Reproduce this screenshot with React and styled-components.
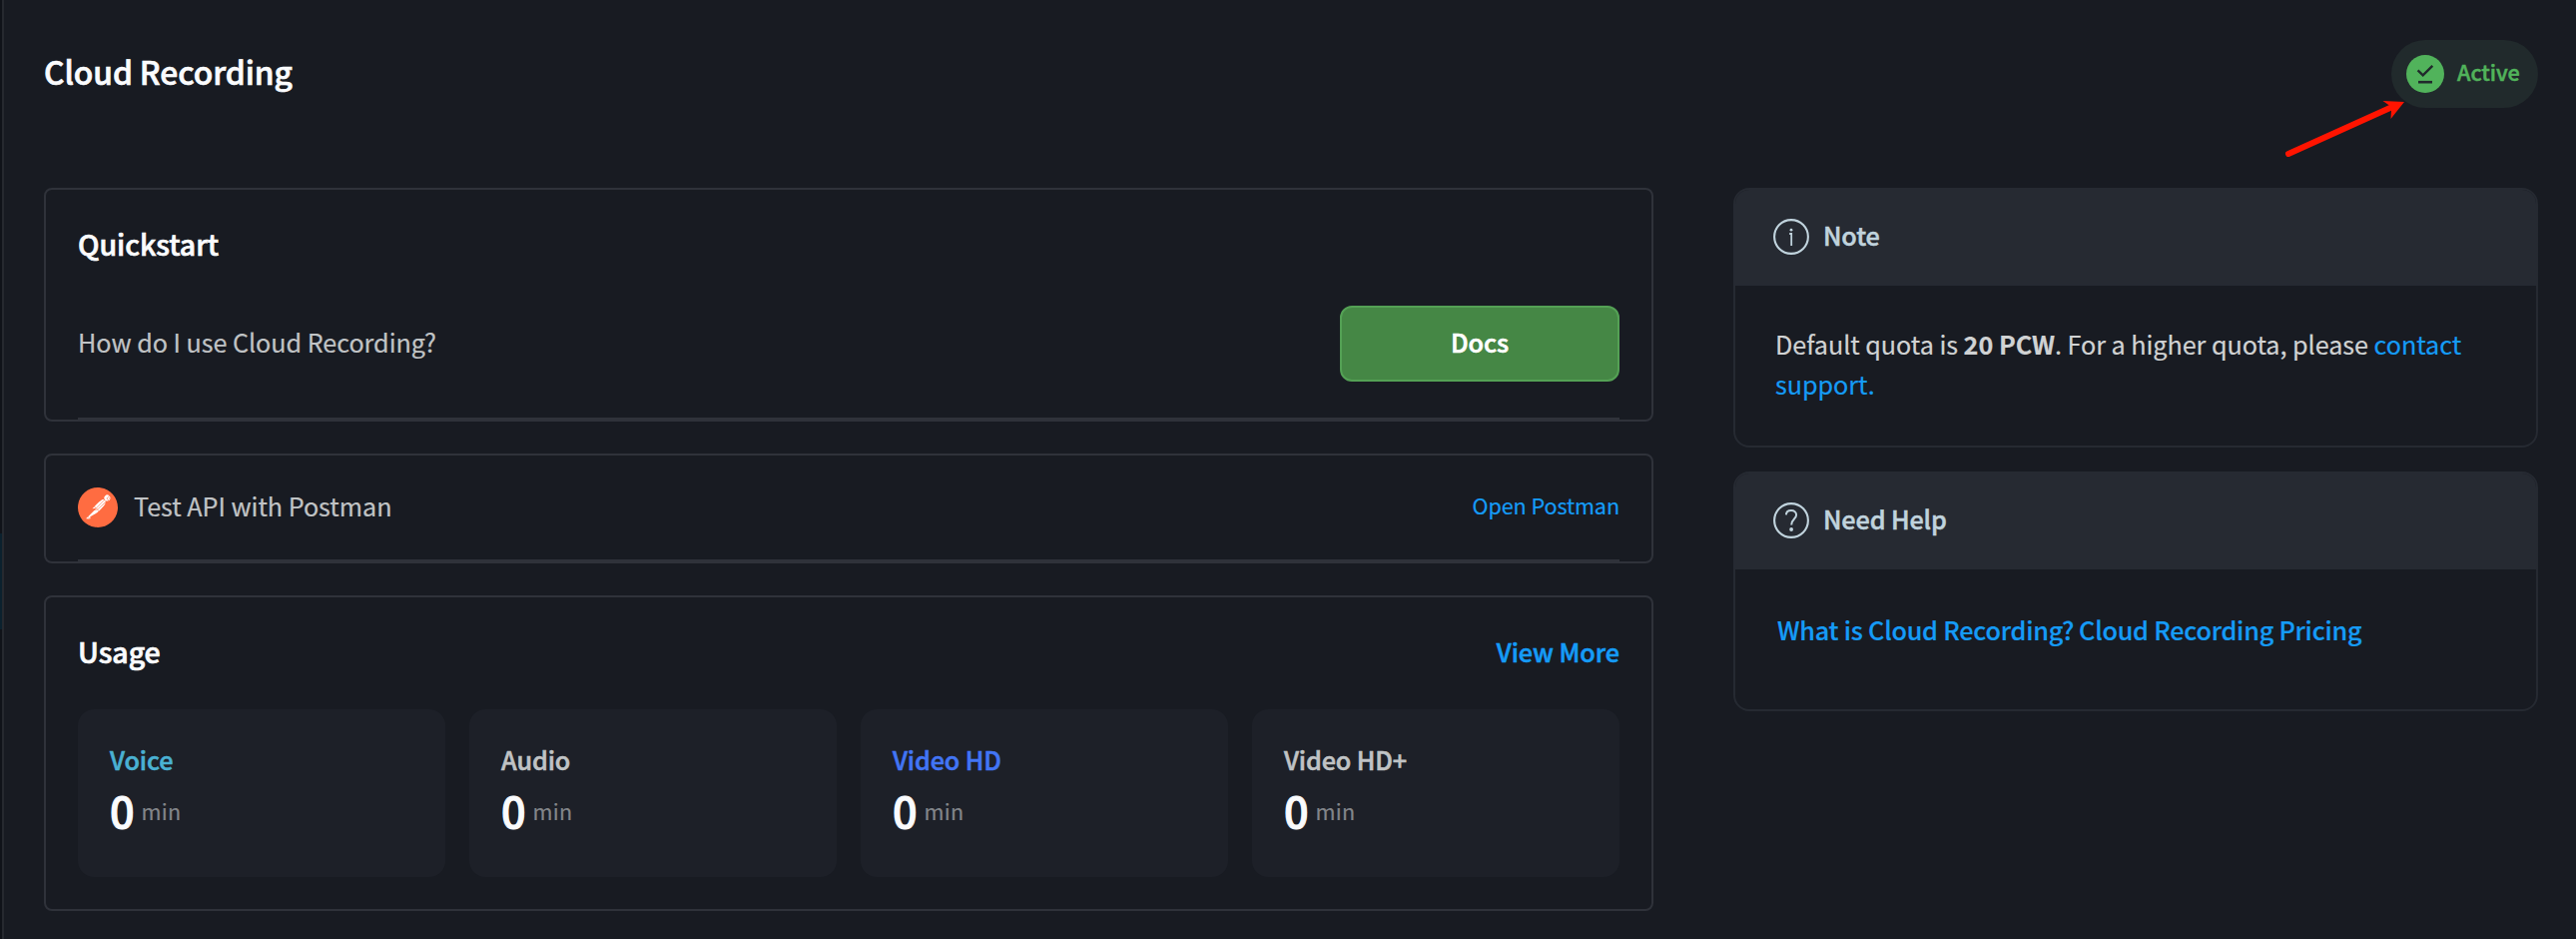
import React from 'react';
import styled, { createGlobalStyle } from 'styled-components';
import { SiPostman } from 'react-icons/si';

const GlobalStyle = createGlobalStyle`
  *, *::before, *::after { box-sizing: border-box; }
  body {
    margin: 0;
    background: #181b22;
    font-family: "Noto Sans CJK SC", "Noto Sans", sans-serif;
    font-size: 25.2px;
    font-weight: 400;
    line-height: 40px;
    letter-spacing: -0.05px;
    -webkit-text-stroke: 0.2px;
    color: #c0c3c5;
  }
`;

const Shell = styled.div`
  display: flex;
  width: 2580px;
  height: 940px;
  overflow: hidden;
`;

const NavEdge = styled.div`
  flex: none;
  width: 4px;
  padding-top: 534px;
  background: #101319;
  border-right: 2px solid #26292f;
`;

const NavActive = styled.div`
  height: 96px;
  background: #0b212e;
`;

const Page = styled.main`
  flex: 1;
  padding: 40px 38px 0 40px;
`;

const Header = styled.header`
  display: flex;
  align-items: center;
  justify-content: space-between;
  height: 68px;
  margin-bottom: 80px;
`;

const Title = styled.h1`
  margin: 0;
  padding-bottom: 6px;
  font-size: 31.8px;
  font-weight: 500;
  letter-spacing: -0.1px;
  -webkit-text-stroke: 0.7px;
  color: #fafbfd;
`;

const StatusPill = styled.div`
  position: relative;
  display: flex;
  align-items: center;
  gap: 13px;
  width: 147px;
  height: 68px;
  padding-left: 15px;
  border-radius: 34px;
  background: #212a2c;
`;

const StatusText = styled.span`
  padding-bottom: 5px;
  font-size: 21.6px;
  font-weight: 500;
  -webkit-text-stroke: 0.5px;
  color: #51b35b;
`;

const Pointer = styled.svg`
  position: absolute;
  left: -107px;
  top: 56px;
  overflow: visible;
`;

const Columns = styled.div`
  display: flex;
  align-items: flex-start;
  justify-content: space-between;
`;

const MainColumn = styled.section`
  display: flex;
  flex-direction: column;
  gap: 32px;
  width: 1612px;
`;

const SideColumn = styled.aside`
  display: flex;
  flex-direction: column;
  gap: 24px;
  width: 806px;
`;

const Card = styled.div`
  padding: ${(p) => p.$padding};
  border: 2px solid #2f323a;
  border-radius: 8px;
`;

const CardRow = styled.div`
  display: flex;
  align-items: center;
  justify-content: space-between;
  height: ${(p) => p.$height}px;
`;

const QuickRow = styled(CardRow)`
  margin-top: 42px;
`;

const Divider = styled.div`
  height: 2px;
  margin-top: ${(p) => p.$gap || 0}px;
  background: #2f323a;
`;

const CardTitle = styled.h2`
  margin: 0;
  font-size: 28.5px;
  font-weight: 500;
  -webkit-text-stroke: 0.7px;
  color: #fafbfd;
`;

const Label = styled.span`
  padding-bottom: 5px;
`;

const Brand = styled.div`
  display: flex;
  align-items: center;
  gap: 16px;
`;

const PostmanBadge = styled.span`
  display: flex;
  color: #ff6c41;
  background: radial-gradient(circle, #fff 0 17px, transparent 17.5px);
`;

const DocsButton = styled.button`
  width: 280px;
  height: 76px;
  padding: 0 0 4px;
  border: 2px solid #54a155;
  border-radius: 12px;
  background: #458745;
  color: #fff;
  font: inherit;
  font-weight: 500;
  -webkit-text-stroke: 0.6px;
`;

const Link = styled.a`
  color: #159bf7;
`;

const StrongLink = styled(Link)`
  font-weight: 500;
  -webkit-text-stroke: ${(p) => p.$stroke || 0.55}px;
`;

const SmallLink = styled(Link)`
  padding-bottom: 5px;
  font-size: 21.6px;
  letter-spacing: -0.1px;
`;

const Stats = styled.div`
  display: grid;
  grid-template-columns: repeat(4, 368px);
  gap: 24px;
  margin-top: 38px;
`;

const Stat = styled.div`
  height: 168px;
  padding: 30px 32px 0;
  border-radius: 16px;
  background: #1d2028;
`;

const StatName = styled.div`
  font-weight: 500;
  letter-spacing: -0.12px;
  -webkit-text-stroke: 0.55px;
  color: ${(p) => p.$color};
`;

const StatValue = styled.div`
  display: flex;
  align-items: center;
  gap: 7px;
  height: 48px;
  margin-top: 6px;
  font-size: 43.2px;
  font-weight: 500;
  -webkit-text-stroke: 1px;
  color: #fafbfd;
`;

const Unit = styled.span`
  padding-top: 3px;
  font-size: 21.6px;
  font-weight: 400;
  letter-spacing: 0.2px;
  -webkit-text-stroke: 0.2px;
  color: #82858a;
`;

const SideCard = styled.div`
  border: 2px solid #262a32;
  border-radius: 16px;
  overflow: hidden;
`;

const SideHeader = styled.div`
  display: flex;
  align-items: center;
  gap: 14px;
  height: 96px;
  padding: 0 38px 2px;
  background: #262a32;
  color: #c0d3dd;
  font-weight: 500;
`;

const SideTitle = styled.span`
  padding-bottom: 4px;
  letter-spacing: -0.12px;
  -webkit-text-stroke: 0.5px;
`;

const SideBody = styled.div`
  padding: ${(p) => p.$padding};
  color: #d0d2d3;

  b { font-weight: 700; }
`;

const HelpLinks = styled.div`
  display: flex;
  gap: 5px;
  letter-spacing: -0.22px;
`;

function ActiveIcon() {
  return (
    <svg width="38" height="38" viewBox="0 0 38 38" fill="none">
      <circle cx="19" cy="19" r="19" fill="#51b35b" />
      <path d="M11.6 15.4L16.7 20.4L26.3 10.9" stroke="#212a2c" strokeWidth="2.4" />
      <path d="M12 27.2H26" stroke="#212a2c" strokeWidth="2.6" />
    </svg>
  );
}

function InfoIcon() {
  return (
    <svg width="36" height="36" viewBox="0 0 36 36" fill="none" stroke="currentColor" strokeWidth="2.1">
      <circle cx="18" cy="18" r="16.9" />
      <path d="M16.2 15H18.2V27" strokeWidth="1.8" />
      <circle cx="18" cy="11.2" r="1.4" fill="currentColor" stroke="none" />
    </svg>
  );
}

function HelpIcon() {
  return (
    <svg width="36" height="36" viewBox="0 0 36 36" fill="none" stroke="currentColor" strokeWidth="2.1">
      <circle cx="18" cy="18" r="16.9" />
      <path d="M12.9 12.4C13 9.6 15.2 8 18 8C20.9 8 23.1 9.8 23.1 12.5C23.1 16.4 18.2 16.8 18.2 22.4" strokeWidth="2" />
      <circle cx="18.1" cy="27" r="1.9" fill="currentColor" stroke="none" />
    </svg>
  );
}

const usage = [
  { name: 'Voice', color: '#4ab1d3' },
  { name: 'Audio', color: '#c0c3c5' },
  { name: 'Video HD', color: '#4275f5' },
  { name: 'Video HD+', color: '#c0c3c5' },
];

export default function App() {
  return (
    <Shell>
      <GlobalStyle />
      <NavEdge>
        <NavActive />
      </NavEdge>
      <Page>
        <Header>
          <Title>Cloud Recording</Title>
          <StatusPill>
            <ActiveIcon />
            <StatusText>Active</StatusText>
            <Pointer width="124" height="64" viewBox="0 0 124 64">
              <path d="M4 58L108 11" stroke="#ff1400" strokeWidth="6" strokeLinecap="round" />
              <path d="M120 6L98.5 5L105 9.5L107 14.5L106.5 23Z" fill="#ff1400" />
            </Pointer>
          </StatusPill>
        </Header>
        <Columns>
          <MainColumn>
            <Card $padding="34px 32px 0">
              <CardTitle>Quickstart</CardTitle>
              <QuickRow $height={76}>
                <Label>How do I use Cloud Recording?</Label>
                <DocsButton>Docs</DocsButton>
              </QuickRow>
              <Divider $gap={36} />
            </Card>
            <Card $padding="0 32px">
              <CardRow $height={104}>
                <Brand>
                  <PostmanBadge>
                    <SiPostman size={40} />
                  </PostmanBadge>
                  <Label>Test API with Postman</Label>
                </Brand>
                <SmallLink>Open Postman</SmallLink>
              </CardRow>
              <Divider />
            </Card>
            <Card $padding="34px 32px 32px">
              <CardRow $height={40}>
                <CardTitle>Usage</CardTitle>
                <StrongLink>View More</StrongLink>
              </CardRow>
              <Stats>
                {usage.map((item) => (
                  <Stat key={item.name}>
                    <StatName $color={item.color}>{item.name}</StatName>
                    <StatValue>
                      0<Unit>min</Unit>
                    </StatValue>
                  </Stat>
                ))}
              </Stats>
            </Card>
          </MainColumn>
          <SideColumn>
            <SideCard>
              <SideHeader>
                <InfoIcon />
                <SideTitle>Note</SideTitle>
              </SideHeader>
              <SideBody $padding="38px 38px 42px 40px">
                Default quota is <b>20 PCW</b>. For a higher quota, please <Link>contact support.</Link>
              </SideBody>
            </SideCard>
            <SideCard>
              <SideHeader>
                <HelpIcon />
                <SideTitle>Need Help</SideTitle>
              </SideHeader>
              <SideBody $padding="40px 42px 60px">
                <HelpLinks>
                  <StrongLink $stroke={0.2}>What is Cloud Recording?</StrongLink>
                  <StrongLink $stroke={0.2}>Cloud Recording Pricing</StrongLink>
                </HelpLinks>
              </SideBody>
            </SideCard>
          </SideColumn>
        </Columns>
      </Page>
    </Shell>
  );
}
